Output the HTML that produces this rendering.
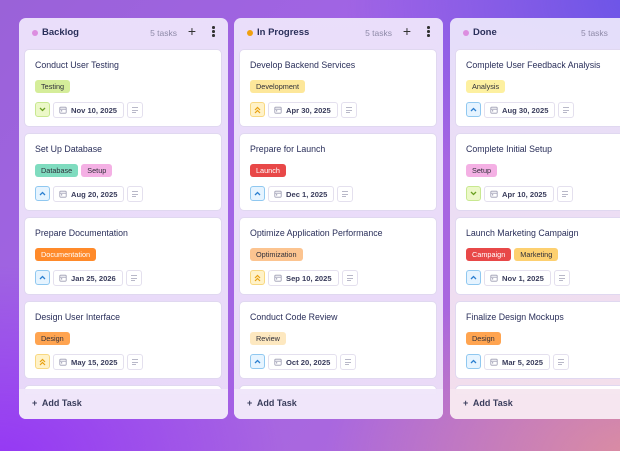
<!DOCTYPE html>
<html><head><meta charset="utf-8"><style>
*{box-sizing:border-box;margin:0;padding:0}
body{width:620px;height:451px;overflow:hidden;font-family:"Liberation Sans",sans-serif;color:#2a2f5a;
background:
radial-gradient(ellipse 420px 300px at 640px 0px,#6a54e8 0%,rgba(106,84,232,0) 70%),
radial-gradient(ellipse 420px 260px at 640px 460px,#dc8ea0 0%,rgba(220,142,160,0) 75%),
radial-gradient(ellipse 380px 260px at 0px 460px,#9538f4 0%,rgba(149,56,244,0) 75%),
linear-gradient(135deg,#9a62d8 0%,#a264e6 40%,#b06ad8 100%);position:relative}
.col{position:absolute;top:18px;width:209px;height:401px;border-radius:7px;overflow:hidden;
background:linear-gradient(180deg,rgba(240,232,252,.93),rgba(238,226,250,.93));}
.col.c3{background:linear-gradient(180deg,rgba(236,232,252,.93),rgba(246,228,238,.95))}
.hd{height:31px;position:relative;font-size:8.5px}
.dot{position:absolute;left:13px;top:12px;width:6px;height:6px;border-radius:50%;background:#dc8ee0}
.hd .t{position:absolute;left:23px;top:9px;font-weight:bold;font-size:9.5px;color:#2a2f5a}
.hd .n{position:absolute;right:51px;top:10px;color:#8e8aa8;font-size:8.5px}
.hd .p{position:absolute;right:32px;top:5px;font-size:14px;color:#333}
.hd .m{position:absolute;right:13px;top:8px;width:3px}
.hd .m i{display:block;width:2.5px;height:2.5px;background:#333;border-radius:50%;margin-bottom:1.5px}
.card{position:absolute;left:5px;width:198px;height:78px;background:#fff;border-radius:5px;border:1px solid #e0d8f0}
.card .ti{position:absolute;left:10px;top:10px;font-size:8.8px;color:#2a2f5a}
.tags{position:absolute;left:10px;top:30px;display:flex;gap:3px}
.tag{font-size:7.3px;padding:0 6px;height:13px;line-height:13px;border-radius:3px;color:#2f2f3a}
.row{position:absolute;left:10px;top:52px;display:flex;gap:3px}
.pr{width:15px;height:15px;border-radius:3px;border:1px solid;display:flex;align-items:center;justify-content:center}
.dt{height:16px;border:1px solid #e4e0ee;border-radius:3px;font-size:7.6px;font-weight:bold;color:#3a3d5c;padding:0 6px 0 5px;display:flex;align-items:center;gap:4px}
.ds{width:16px;height:16px;border:1px solid #e4e0ee;border-radius:3px;display:flex;flex-direction:column;justify-content:center;padding-left:4px;gap:1.5px}
.ds i{display:block;height:1px;background:#b8b8c8}
.ft{position:absolute;left:0;top:371px;width:209px;height:30px;font-size:9px;font-weight:bold;color:#3a3d5c;background:rgba(240,230,250,.97)}
.c3 .ft{background:rgba(246,230,240,.97)}
.ft span{position:absolute;left:13px;top:9px}
.peek{position:absolute;left:5px;width:198px;top:367px;height:10px;background:#fff;border-radius:5px 5px 0 0;border:1px solid #e0d8f0}
</style></head><body>

<svg width="0" height="0" style="position:absolute"><defs>
<symbol id="cal" viewBox="0 0 10 10"><rect x="1" y="1.5" width="8" height="7.5" rx="1" fill="none" stroke="#9a9ab0" stroke-width="1"/><line x1="1" y1="4" x2="9" y2="4" stroke="#9a9ab0"/><rect x="2.5" y="5.3" width="1.5" height="1.5" fill="#9a9ab0"/></symbol>
</defs></svg>

<!-- Column 1 -->
<div class="col" style="left:19px">
 <div class="hd"><div class="dot"></div><div class="t">Backlog</div><div class="n">5 tasks</div><div class="p">+</div><div class="m"><i></i><i></i><i></i></div></div>
 <div class="card" style="top:31px"><div class="ti">Conduct User Testing</div><div class="tags"><div class="tag" style="background:#d5ed9a">Testing</div></div>
  <div class="row"><div class="pr" style="background:#ecf8c8;border-color:#c8e890"><svg width="7" height="5"><path d="M1 1l2.5 2.5L6 1" fill="none" stroke="#6aa020" stroke-width="1.3"/></svg></div><div class="dt"><svg width="8" height="8"><use href="#cal"/></svg>Nov 10, 2025</div><div class="ds"><i style="width:6px"></i><i style="width:6px"></i><i style="width:4px"></i></div></div></div>
 <div class="card" style="top:115px"><div class="ti">Set Up Database</div><div class="tags"><div class="tag" style="background:#7fdcbf">Database</div><div class="tag" style="background:#f4b0e4">Setup</div></div>
  <div class="row"><div class="pr" style="background:#e6f4ff;border-color:#90c8f0"><svg width="7" height="5"><path d="M1 4l2.5-2.5L6 4" fill="none" stroke="#2b7fd0" stroke-width="1.3"/></svg></div><div class="dt"><svg width="8" height="8"><use href="#cal"/></svg>Aug 20, 2025</div><div class="ds"><i style="width:6px"></i><i style="width:6px"></i><i style="width:4px"></i></div></div></div>
 <div class="card" style="top:199px"><div class="ti">Prepare Documentation</div><div class="tags"><div class="tag" style="background:#ff8a2a;color:#fff">Documentation</div></div>
  <div class="row"><div class="pr" style="background:#e6f4ff;border-color:#90c8f0"><svg width="7" height="5"><path d="M1 4l2.5-2.5L6 4" fill="none" stroke="#2b7fd0" stroke-width="1.3"/></svg></div><div class="dt"><svg width="8" height="8"><use href="#cal"/></svg>Jan 25, 2026</div><div class="ds"><i style="width:6px"></i><i style="width:6px"></i><i style="width:4px"></i></div></div></div>
 <div class="card" style="top:283px"><div class="ti">Design User Interface</div><div class="tags"><div class="tag" style="background:#ffa450">Design</div></div>
  <div class="row"><div class="pr" style="background:#fff2c8;border-color:#f8d880"><svg width="7" height="8"><path d="M1 4l2.5-2.5L6 4M1 7l2.5-2.5L6 7" fill="none" stroke="#e8a010" stroke-width="1.2"/></svg></div><div class="dt"><svg width="8" height="8"><use href="#cal"/></svg>May 15, 2025</div><div class="ds"><i style="width:6px"></i><i style="width:6px"></i><i style="width:4px"></i></div></div></div>
 <div class="peek"></div>
 <div class="ft"><span>+&nbsp; Add Task</span></div>
</div>

<!-- Column 2 -->
<div class="col" style="left:234px">
 <div class="hd"><div class="dot" style="background:#f0a010"></div><div class="t">In Progress</div><div class="n">5 tasks</div><div class="p">+</div><div class="m"><i></i><i></i><i></i></div></div>
 <div class="card" style="top:31px"><div class="ti">Develop Backend Services</div><div class="tags"><div class="tag" style="background:#fde79a">Development</div></div>
  <div class="row"><div class="pr" style="background:#fff2c8;border-color:#f8d880"><svg width="7" height="8"><path d="M1 4l2.5-2.5L6 4M1 7l2.5-2.5L6 7" fill="none" stroke="#e8a010" stroke-width="1.2"/></svg></div><div class="dt"><svg width="8" height="8"><use href="#cal"/></svg>Apr 30, 2025</div><div class="ds"><i style="width:6px"></i><i style="width:6px"></i><i style="width:4px"></i></div></div></div>
 <div class="card" style="top:115px"><div class="ti">Prepare for Launch</div><div class="tags"><div class="tag" style="background:#e84848;color:#fff">Launch</div></div>
  <div class="row"><div class="pr" style="background:#e6f4ff;border-color:#90c8f0"><svg width="7" height="5"><path d="M1 4l2.5-2.5L6 4" fill="none" stroke="#2b7fd0" stroke-width="1.3"/></svg></div><div class="dt"><svg width="8" height="8"><use href="#cal"/></svg>Dec 1, 2025</div><div class="ds"><i style="width:6px"></i><i style="width:6px"></i><i style="width:4px"></i></div></div></div>
 <div class="card" style="top:199px"><div class="ti">Optimize Application Performance</div><div class="tags"><div class="tag" style="background:#fcc490">Optimization</div></div>
  <div class="row"><div class="pr" style="background:#fff2c8;border-color:#f8d880"><svg width="7" height="8"><path d="M1 4l2.5-2.5L6 4M1 7l2.5-2.5L6 7" fill="none" stroke="#e8a010" stroke-width="1.2"/></svg></div><div class="dt"><svg width="8" height="8"><use href="#cal"/></svg>Sep 10, 2025</div><div class="ds"><i style="width:6px"></i><i style="width:6px"></i><i style="width:4px"></i></div></div></div>
 <div class="card" style="top:283px"><div class="ti">Conduct Code Review</div><div class="tags"><div class="tag" style="background:#fde8c0">Review</div></div>
  <div class="row"><div class="pr" style="background:#e6f4ff;border-color:#90c8f0"><svg width="7" height="5"><path d="M1 4l2.5-2.5L6 4" fill="none" stroke="#2b7fd0" stroke-width="1.3"/></svg></div><div class="dt"><svg width="8" height="8"><use href="#cal"/></svg>Oct 20, 2025</div><div class="ds"><i style="width:6px"></i><i style="width:6px"></i><i style="width:4px"></i></div></div></div>
 <div class="peek"></div>
 <div class="ft"><span>+&nbsp; Add Task</span></div>
</div>

<!-- Column 3 -->
<div class="col c3" style="left:450px">
 <div class="hd"><div class="dot"></div><div class="t">Done</div><div class="n" style="right:11px;left:131px">5 tasks</div></div>
 <div class="card" style="top:31px"><div class="ti">Complete User Feedback Analysis</div><div class="tags"><div class="tag" style="background:#fdf0a0">Analysis</div></div>
  <div class="row"><div class="pr" style="background:#e6f4ff;border-color:#90c8f0"><svg width="7" height="5"><path d="M1 4l2.5-2.5L6 4" fill="none" stroke="#2b7fd0" stroke-width="1.3"/></svg></div><div class="dt"><svg width="8" height="8"><use href="#cal"/></svg>Aug 30, 2025</div><div class="ds"><i style="width:6px"></i><i style="width:6px"></i><i style="width:4px"></i></div></div></div>
 <div class="card" style="top:115px"><div class="ti">Complete Initial Setup</div><div class="tags"><div class="tag" style="background:#f4b0e4">Setup</div></div>
  <div class="row"><div class="pr" style="background:#ecf8c8;border-color:#c8e890"><svg width="7" height="5"><path d="M1 1l2.5 2.5L6 1" fill="none" stroke="#6aa020" stroke-width="1.3"/></svg></div><div class="dt"><svg width="8" height="8"><use href="#cal"/></svg>Apr 10, 2025</div><div class="ds"><i style="width:6px"></i><i style="width:6px"></i><i style="width:4px"></i></div></div></div>
 <div class="card" style="top:199px"><div class="ti">Launch Marketing Campaign</div><div class="tags"><div class="tag" style="background:#e84848;color:#fff">Campaign</div><div class="tag" style="background:#fdd070">Marketing</div></div>
  <div class="row"><div class="pr" style="background:#e6f4ff;border-color:#90c8f0"><svg width="7" height="5"><path d="M1 4l2.5-2.5L6 4" fill="none" stroke="#2b7fd0" stroke-width="1.3"/></svg></div><div class="dt"><svg width="8" height="8"><use href="#cal"/></svg>Nov 1, 2025</div><div class="ds"><i style="width:6px"></i><i style="width:6px"></i><i style="width:4px"></i></div></div></div>
 <div class="card" style="top:283px"><div class="ti">Finalize Design Mockups</div><div class="tags"><div class="tag" style="background:#ffa450">Design</div></div>
  <div class="row"><div class="pr" style="background:#e6f4ff;border-color:#90c8f0"><svg width="7" height="5"><path d="M1 4l2.5-2.5L6 4" fill="none" stroke="#2b7fd0" stroke-width="1.3"/></svg></div><div class="dt"><svg width="8" height="8"><use href="#cal"/></svg>Mar 5, 2025</div><div class="ds"><i style="width:6px"></i><i style="width:6px"></i><i style="width:4px"></i></div></div></div>
 <div class="peek"></div>
 <div class="ft"><span>+&nbsp; Add Task</span></div>
</div>
</body></html>
